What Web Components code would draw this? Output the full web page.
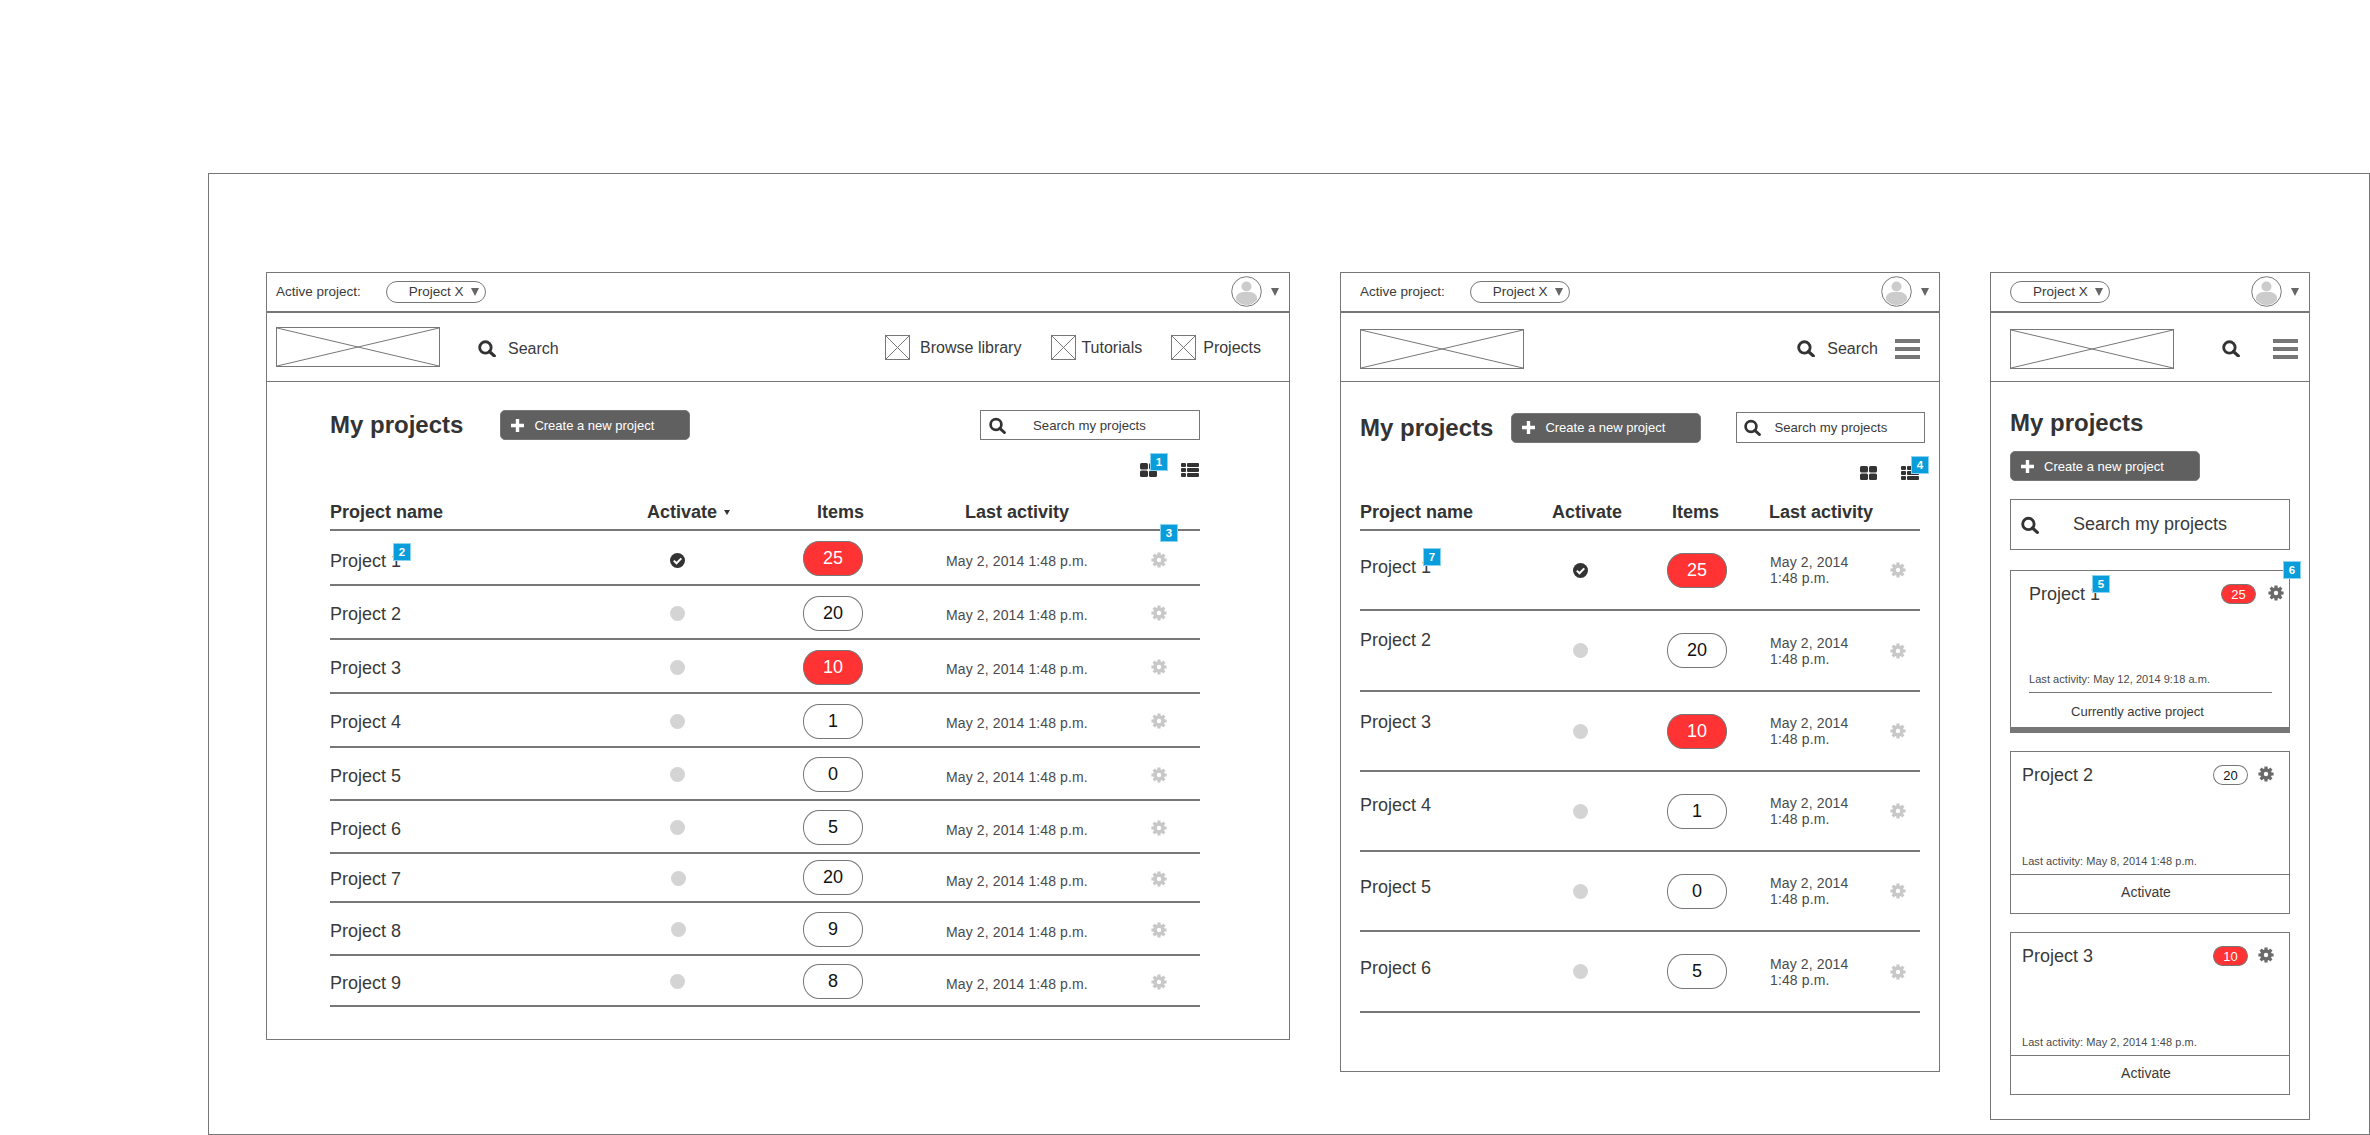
<!DOCTYPE html>
<html>
<head>
<meta charset="utf-8">
<title>My projects wireframe</title>
<style>
html, body { margin: 0; background: #fff; overflow: hidden; }
body { padding: 173px 0 0 208px; font-family: "Liberation Sans", Arial, sans-serif; color: #333; }
</style>
</head>
<body>

<ux-frame>
  <!-- desktop -->
  <ux-window style="--w:1024px;--h:768px">
    <ux-topbar label="Active project:" style="--top-pad:9px"></ux-topbar>
    <ux-nav style="--nav-pad:9px;--nav-right:28px">
      <ux-nav-search label="Search" style="margin-left:38px;margin-right:auto"></ux-nav-search>
      <ux-nav-link label="Browse library" style="--link-gap:10px;margin-right:30px"></ux-nav-link>
      <ux-nav-link label="Tutorials" style="--link-gap:5px;margin-right:29px"></ux-nav-link>
      <ux-nav-link label="Projects" style="--link-gap:7px"></ux-nav-link>
    </ux-nav>
    <ux-main style="--main-top:28px;--main-left:63px;--main-right:89px;
      --cols:317px 138px 161px 202px 52px;--dot-ml:23px;--pill-ml:18px;--gear-ml:3px;
      --head-items:32px;--head-last:19px;--row-pad:2px;--date-pad:4px;--name-pad:3px">
      <ux-title-row style="--row-h:30px">
        <ux-title style="margin-right:37px">My projects</ux-title>
        <ux-create></ux-create>
        <ux-search-box style="margin-left:auto;--box-w:220px;--box-h:30px;--box-pad:8px;--box-gap:27px"></ux-search-box>
      </ux-title-row>
      <ux-views style="--views-top:23px;--views-bottom:18px;--views-gap:23px">
        <ux-view-icon kind="cards"><ux-note n="1" style="left:10px;top:-10px"></ux-note></ux-view-icon>
        <ux-view-icon kind="list"></ux-view-icon>
      </ux-views>
      <ux-head sorted></ux-head>
      <ux-row h="55" name="Project 1" items="25" hot active style="--name-pad:5px;--act-top:3px;--gear-top:2px"><ux-note slot="note" n="2" style="left:63px;top:-8px"></ux-note><ux-note slot="gear" n="3" style="left:9px;top:-28px"></ux-note></ux-row>
      <ux-row h="54" name="Project 2" items="20"></ux-row>
      <ux-row h="54" name="Project 3" items="10" hot></ux-row>
      <ux-row h="54" name="Project 4" items="1"></ux-row>
      <ux-row h="53" name="Project 5" items="0"></ux-row>
      <ux-row h="53" name="Project 6" items="5"></ux-row>
      <ux-row h="49" name="Project 7" items="20" dx="1" style="--pill-top:-3px;--name-pad:1px"></ux-row>
      <ux-row h="53" name="Project 8" items="9" dx="1"></ux-row>
      <ux-row h="51" name="Project 9" items="8"></ux-row>
    </ux-main>
  </ux-window>

  <!-- tablet -->
  <ux-window style="--w:600px;--h:800px">
    <ux-topbar label="Active project:" style="--top-pad:19px"></ux-topbar>
    <ux-nav style="--nav-pad:19px;--nav-right:19px;--logo-top:4px">
      <ux-nav-search label="Search" style="margin-left:auto;margin-right:17px"></ux-nav-search>
      <ux-burger></ux-burger>
    </ux-nav>
    <ux-main style="--main-top:31px;--main-left:19px;--main-right:19px;
      --cols:192px 115px 103px 120px 30px;--dot-ml:21px;--pill-ml:0px;--gear-ml:0px;
      --head-items:5px;--head-last:-1px;--row-pad:0px;--date-pad:0px;--name-pad:0px">
      <ux-title-row style="--row-h:29px">
        <ux-title style="margin-right:18px">My projects</ux-title>
        <ux-create></ux-create>
        <ux-search-box style="margin-left:35px;margin-right:-5px;--box-w:189px;--box-h:31px;--box-pad:7px;--box-gap:13px"></ux-search-box>
      </ux-title-row>
      <ux-views style="--views-top:24px;--views-bottom:15px;--views-gap:23px">
        <ux-view-icon kind="squares"></ux-view-icon>
        <ux-view-icon kind="list"><ux-note n="4" style="left:10px;top:-10px"></ux-note></ux-view-icon>
      </ux-views>
      <ux-head></ux-head>
      <ux-row h="80" name="Project 1" items="25" hot active two up="3"><ux-note slot="note" n="7" style="left:63px;top:-9px"></ux-note></ux-row>
      <ux-row h="81" name="Project 2" items="20" two up="10"></ux-row>
      <ux-row h="80" name="Project 3" items="10" hot two up="9"></ux-row>
      <ux-row h="80" name="Project 4" items="1" two up="6"></ux-row>
      <ux-row h="80" name="Project 5" items="0" two up="4"></ux-row>
      <ux-row h="81" name="Project 6" items="5" two up="3"></ux-row>
    </ux-main>
  </ux-window>

  <!-- phone -->
  <ux-window style="--w:320px;--h:848px">
    <ux-topbar style="--top-pad:19px"></ux-topbar>
    <ux-nav style="--nav-pad:19px;--nav-right:11px;--logo-top:4px">
      <ux-nav-search style="margin-left:auto;margin-right:33px"></ux-nav-search>
      <ux-burger></ux-burger>
    </ux-nav>
    <ux-main style="--main-top:26px;--main-left:19px;--main-right:19px">
      <ux-title style="height:30px">My projects</ux-title>
      <ux-create style="margin-top:13px"></ux-create>
      <ux-search-box style="margin-top:18px;--box-w:280px;--box-h:51px;--box-pad:10px;--box-gap:34px;--box-fs:18px;--box-icon:18px"></ux-search-box>
      <ux-card style="margin-top:20px" name="Project 1" items="25" hot current date="May 12, 2014 9:18 a.m."><ux-note slot="note" n="5" style="left:63px;top:-9px"></ux-note><ux-note slot="gear" n="6" style="left:15px;top:-24px"></ux-note></ux-card>
      <ux-card style="margin-top:18px" name="Project 2" items="20" date="May 8, 2014 1:48 p.m."></ux-card>
      <ux-card style="margin-top:18px" name="Project 3" items="10" hot date="May 2, 2014 1:48 p.m."></ux-card>
    </ux-main>
  </ux-window>
</ux-frame>

<script>
function define(tag, css, html){
    customElements.define(tag, class extends HTMLElement{
        connectedCallback(){
            if(this.shadowRoot) return;
            this.attachShadow({mode : 'open'});
            this.shadowRoot.innerHTML = `<style>${css}</style>${html(this)}`;
        }
    });
}

const SEARCH = `<svg viewBox="0 0 17 16" width="100%" height="100%" style="display:block"><circle cx="7" cy="7" r="5.4" fill="none" stroke="#333" stroke-width="2.7"/><path d="M10.8 10.8 15.4 15" stroke="#333" stroke-width="3" stroke-linecap="round"/></svg>`;
const CROSS = `<svg viewBox="0 0 100 100" preserveAspectRatio="none" width="100%" height="100%" style="display:block"><path d="M0 0 100 100M100 0 0 100" stroke="#777" stroke-width="1" vector-effect="non-scaling-stroke" fill="none"/></svg>`;
const CARET = `<svg width="8" height="8" viewBox="0 0 8 8" style="display:block"><path d="M0 0H8L4 8Z" fill="#666"/></svg>`;

define('ux-frame', `
    :host { display: flex; align-items: flex-start; gap: 50px; box-sizing: border-box;
            width: 2162px; height: 962px; padding: 98px 0 0 57px; border: 1px solid #777; }
`, () => `<slot></slot>`);

define('ux-window', `
    :host { display: flex; flex-direction: column; box-sizing: border-box; flex: none;
            width: var(--w); height: var(--h); border: 1px solid #777; background: #fff; }
`, () => `<slot></slot>`);

define('ux-topbar', `
    :host { display: flex; align-items: center; box-sizing: border-box; flex: none; height: 40px;
            padding: 0 10px 1px var(--top-pad); border-bottom: 2px solid #777; font-size: 13.5px; color: #3a3a3a; }
    .label { margin-right: 25px; }
    .pill { display: flex; align-items: center; box-sizing: border-box; width: 100px; height: 22px;
            padding-left: 22px; gap: 7px; border: 1px solid #777; border-radius: 11px; }
    .user { margin-left: auto; display: flex; align-items: center; gap: 9px; }
`, el => `
    ${el.getAttribute('label') ? `<span class="label">${el.getAttribute('label')}</span>` : ''}
    <div class="pill"><span>Project X</span>${CARET}</div>
    <div class="user">
        <svg width="31" height="31" viewBox="0 0 31 31">
            <defs><clipPath id="c"><circle cx="15.5" cy="15.5" r="13.5"/></clipPath></defs>
            <circle cx="15.5" cy="15.5" r="14.8" fill="#fff" stroke="#777" stroke-width="1"/>
            <g clip-path="url(#c)" fill="#ccc">
                <circle cx="15.5" cy="10.5" r="5"/>
                <path d="M5 31V22C5 18 9 16.5 12 16h7c3 .5 7 2 7 6v9Z"/>
            </g>
        </svg>
        ${CARET}
    </div>
`);

define('ux-nav', `
    :host { display: flex; align-items: center; box-sizing: border-box; flex: none; height: 69px;
            padding: 0 var(--nav-right) 0 var(--nav-pad); border-bottom: 1px solid #777; }
    .logo { box-sizing: border-box; flex: none; width: 164px; height: 40px; border: 1px solid #777; margin-top: var(--logo-top, 0); }
`, () => `<div class="logo">${CROSS}</div><slot></slot>`);

define('ux-nav-search', `
    :host { display: flex; align-items: center; gap: 12px; font-size: 16px; color: #3a3a3a; margin-top: 2px; }
    .i { width: 18px; height: 17px; margin-top: 1px; }
    span { margin-top: 1px; }
`, el => `<div class="i">${SEARCH}</div>${el.getAttribute('label') ? `<span>${el.getAttribute('label')}</span>` : ''}`);

define('ux-nav-link', `
    :host { display: flex; align-items: center; gap: var(--link-gap); font-size: 16px; color: #3a3a3a; margin-top: 1px; }
    .i { box-sizing: border-box; width: 25px; height: 25px; border: 1px solid #777; }
`, el => `<div class="i">${CROSS}</div><span>${el.getAttribute('label')}</span>`);

define('ux-burger', `
    :host { display: flex; flex-direction: column; justify-content: space-between; flex: none; width: 25px; height: 20px; margin-top: 3px; }
    i { display: block; height: 4px; background: #777; }
`, () => `<i></i><i></i><i></i>`);

define('ux-main', `
    :host { display: flex; flex-direction: column; flex: 1; min-height: 0;
            padding: var(--main-top) var(--main-right) 0 var(--main-left); }
`, () => `<slot></slot>`);

define('ux-title-row', `
    :host { display: flex; align-items: center; height: var(--row-h); flex: none; }
`, () => `<slot></slot>`);

define('ux-title', `
    :host { display: flex; align-items: center; flex: none; font-size: 24px; font-weight: bold; color: #333; }
`, () => `<slot></slot>`);

define('ux-create', `
    :host { display: flex; align-items: center; box-sizing: border-box; flex: none; width: 190px; height: 30px;
            padding-left: 10px; gap: 10px; background: #606060; border: 1px solid #777; border-radius: 5px;
            color: #fff; font-size: 13px; }
`, () => `<svg width="13" height="13" viewBox="0 0 13 13"><path d="M6.5 0v13M0 6.5h13" stroke="#fff" stroke-width="3.4"/></svg><span>Create a new project</span>`);

define('ux-search-box', `
    :host { display: flex; align-items: center; box-sizing: border-box; flex: none; width: var(--box-w); height: var(--box-h);
            padding-left: var(--box-pad); gap: var(--box-gap); border: 1px solid #777; font-size: var(--box-fs, 13.2px); color: #3a3a3a; }
    .i { width: var(--box-icon, 17px); height: var(--box-icon, 17px); }
`, () => `<div class="i">${SEARCH}</div><span>Search my projects</span>`);

define('ux-views', `
    :host { display: flex; justify-content: flex-end; gap: var(--views-gap); flex: none;
            margin: var(--views-top) 1px var(--views-bottom) 0; }
`, () => `<slot></slot>`);

define('ux-view-icon', `
    :host { position: relative; display: block; width: 18px; height: 14px; }
    svg { display: block; }
`, el => {
    const kind = el.getAttribute('kind');
    let shapes = '';
    if(kind === 'list'){
        shapes = `<rect x="0" y="0" width="5" height="4" rx="1"/><rect x="6" y="0" width="12" height="4" rx="1"/>
                  <rect x="0" y="5" width="5" height="4" rx="1"/><rect x="6" y="5" width="12" height="4" rx="1"/>
                  <rect x="0" y="10" width="5" height="4" rx="1"/><rect x="6" y="10" width="12" height="4" rx="1"/>`;
    } else {
        shapes = `<rect x="0" y="0" width="8" height="6.5" rx="1.5"/><rect x="9" y="0" width="8" height="6.5" rx="1.5"/>
                  <rect x="0" y="7.5" width="8" height="6.5" rx="1.5"/><rect x="9" y="7.5" width="8" height="6.5" rx="1.5"/>`;
    }
    return `<svg width="18" height="14" viewBox="0 0 18 14" fill="#333">${shapes}</svg><slot></slot>`;
});

define('ux-note', `
    :host { position: absolute; z-index: 2; display: flex; align-items: center; justify-content: center; box-sizing: border-box;
            width: 18px; height: 18px; background: #0a9ddb; border: 1px solid #8ad4f2;
            color: #fff; font-size: 11.5px; font-weight: bold; }
`, el => `${el.getAttribute('n')}`);

define('ux-gear', `
    :host { position: relative; display: block; width: 16px; height: 16px; flex: none; color: var(--gear, #c8c8c8); }
    svg { display: block; }
`, () => `<svg width="16" height="16" viewBox="0 0 16 16">
    <path d="M8 .4v15.2M.4 8h15.2M2.6 2.6l10.8 10.8M13.4 2.6 2.6 13.4" stroke="currentColor" stroke-width="3.2" fill="none"/>
    <circle cx="8" cy="8" r="5.8" fill="currentColor"/><circle cx="8" cy="8" r="2.2" fill="#fff"/></svg><slot></slot>`);

define('ux-pill', `
    :host { display: flex; align-items: center; justify-content: center; box-sizing: border-box; flex: none;
            width: var(--pill-w, 60px); height: var(--pill-h, 35px); border: 1px solid #777; border-radius: 16px / 17px;
            font-size: var(--pill-fs, 18px); color: #111; background: #fff; }
    :host([hot]) { background: #ff3333; color: #fff; }
`, () => `<slot></slot>`);

define('ux-head', `
    :host { display: grid; grid-template-columns: var(--cols); align-items: center; box-sizing: border-box; flex: none;
            height: 36px; padding-top: 1px; border-bottom: 2px solid #777; font-size: 18px; font-weight: bold; color: #333; }
    .a { display: flex; align-items: center; gap: 7px; white-space: nowrap; }
    .a i { border: 3px solid transparent; border-top: 5px solid #333; border-bottom: 0; }
    .n { white-space: nowrap; }
    .items { margin-left: var(--head-items); }
    .last { margin-left: var(--head-last); white-space: nowrap; }
`, el => `
    <div class="n">Project name</div>
    <div class="a">Activate${el.hasAttribute('sorted') ? '<i></i>' : ''}</div>
    <div class="items">Items</div>
    <div class="last">Last activity</div>
`);

define('ux-row', `
    :host { display: grid; grid-template-columns: var(--cols); align-items: center; box-sizing: border-box; flex: none;
            padding-top: var(--row-pad); border-bottom: 2px solid #777; color: #3a3a3a; }
    .name { padding-top: var(--name-pad); font-size: 18px; }
    .name span { position: relative; display: inline-block; }
    .act { margin-left: var(--dot-ml); margin-top: var(--act-top, 0); display: block; }
    .dot { width: 15px; height: 15px; border-radius: 50%; background: #d4d4d4; }
    .pill { margin-left: var(--pill-ml); margin-top: var(--pill-top, 0); }
    .date { padding-top: var(--date-pad); font-size: 14px; letter-spacing: .12px; line-height: 16px; color: #4a4a4a; }
    ux-gear { margin-left: var(--gear-ml); margin-top: var(--gear-top, 0); }
    svg { display: block; }
`, el => {
    el.style.height = el.getAttribute('h') + 'px';
    const up = +el.getAttribute('up') || 0;
    const dx = +el.getAttribute('dx') || 0;
    const act = el.hasAttribute('active')
        ? `<svg class="act" width="15" height="15" viewBox="0 0 15 15"><circle cx="7.5" cy="7.5" r="7.5" fill="#333"/><path d="M3.8 7.6 6.5 10.3 11.3 5.4" stroke="#fff" stroke-width="2" fill="none"/></svg>`
        : `<div class="act dot" style="transform:translateX(${dx}px)"></div>`;
    const date = el.hasAttribute('two') ? 'May 2, 2014<br>1:48 p.m.' : 'May 2, 2014 1:48 p.m.';
    return `
        <div class="name" style="padding-bottom:${up * 2}px"><span>${el.getAttribute('name')}<slot name="note"></slot></span></div>
        ${act}
        <ux-pill class="pill" ${el.hasAttribute('hot') ? 'hot' : ''}>${el.getAttribute('items')}</ux-pill>
        <div class="date">${date}</div>
        <ux-gear><slot name="gear"></slot></ux-gear>
    `;
});

define('ux-card', `
    :host { display: flex; flex-direction: column; box-sizing: border-box; flex: none; height: 163px;
            border: 1px solid #777; color: #3a3a3a; --gear: #6a6a6a; --pill-w: 35px; --pill-h: 20px; --pill-fs: 13px; }
    .top { display: flex; align-items: center; height: 20px; margin-top: 13px; padding: 0 15px 0 11px; }
    .name { position: relative; font-size: 18px; margin-right: auto; }
    ux-gear { margin: -2px 0 0 10px; }
    .last { margin-top: auto; padding: 0 0 6px 11px; font-size: 11px; letter-spacing: .05px; line-height: 14px; color: #4a4a4a; }
    .foot { height: 39px; box-sizing: border-box; border-top: 1px solid #777; display: flex; align-items: center;
            justify-content: center; padding: 0 8px 4px 0; font-size: 14px; }
    :host([current]) { border-bottom-width: 6px; }
    :host([current]) .top { padding: 0 5px 0 18px; }
    :host([current]) ux-gear { margin-left: 12px; }
    :host([current]) .last { padding-left: 18px; }
    :host([current]) .foot { margin: 0 17px 0 18px; height: 35px; padding: 2px 26px 0 0; font-size: 13px; }
`, el => `
    <div class="top">
        <div class="name">${el.getAttribute('name')}<slot name="note"></slot></div>
        <ux-pill ${el.hasAttribute('hot') ? 'hot' : ''}>${el.getAttribute('items')}</ux-pill>
        <ux-gear><slot name="gear"></slot></ux-gear>
    </div>
    <div class="last">Last activity: ${el.getAttribute('date')}</div>
    <div class="foot">${el.hasAttribute('current') ? 'Currently active project' : 'Activate'}</div>
`);
</script>
</body>
</html>
